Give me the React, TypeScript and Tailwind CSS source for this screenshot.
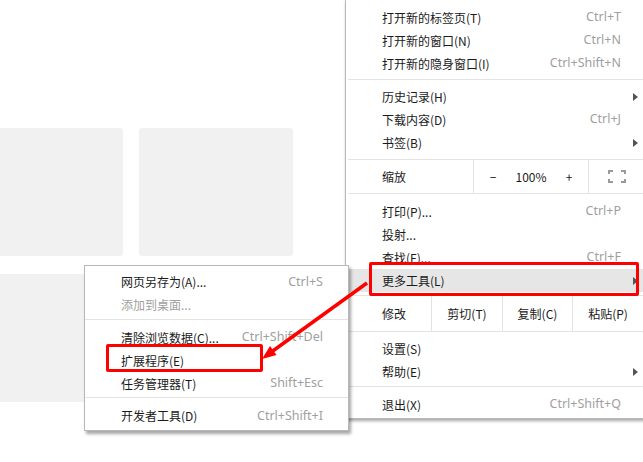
import React from "react";

const Arrow = () => (
  <span className="absolute right-[7px] top-1/2 -translate-y-1/2 w-0 h-0 border-y-[4px] border-y-transparent border-l-[5px] border-l-[#555]" />
);

type ItemProps = { label: string; shortcut?: string; arrow?: boolean; disabled?: boolean; highlight?: boolean };

const Key = ({ children }: { children?: React.ReactNode }) => (
  <span className="ml-auto text-[#a0a0a0] text-[12.5px]" style={{ fontFamily: '"Noto Sans", "Noto Sans CJK SC", sans-serif' }}>
    {children}
  </span>
);

const MainItem = ({ label, shortcut, arrow, disabled, highlight }: ItemProps) => (
  <div className={`relative flex items-center h-[23px] pl-[36px] pr-[24px] ${highlight ? "bg-[#e6e6e6]" : ""}`}>
    <span className={disabled ? "text-[#a0a0a0]" : "text-[#1a1a1a]"}>{label}</span>
    <Key>{shortcut}</Key>
    {arrow && <Arrow />}
  </div>
);

export default function App() {
  return (
    <div
      className="relative w-[643px] h-[462px] bg-white overflow-hidden text-[12px] leading-none"
      style={{ fontFamily: '"Noto Sans CJK SC", "Noto Sans", sans-serif' }}
    >
      {/* page background tiles */}
      <div className="pt-[128px] flex flex-col gap-[18px]">
        <div className="flex gap-[16px]">
          <div className="w-[123px] h-[128px] bg-[#f1f1f1] rounded-r-[3px]" />
          <div className="w-[154px] h-[128px] bg-[#f1f1f1] rounded-[3px]" />
        </div>
        <div className="flex gap-[16px]">
          <div className="w-[123px] h-[128px] bg-[#f1f1f1] rounded-r-[3px]" />
          <div className="w-[154px] h-[128px] bg-[#f1f1f1] rounded-[3px]" />
        </div>
      </div>

      {/* main menu */}
      <div className="absolute left-[345px] top-0 w-[300px] h-[419px] bg-white border-l border-b border-[#b8b8b8] shadow-[1px_2px_3px_rgba(0,0,0,0.35)] pt-[6px]">
        <MainItem label="打开新的标签页(T)" shortcut="Ctrl+T" />
        <MainItem label="打开新的窗口(N)" shortcut="Ctrl+N" />
        <MainItem label="打开新的隐身窗口(I)" shortcut="Ctrl+Shift+N" />
        <div className="h-px bg-[#e3e3e3] ml-[2px] mt-[4px] mb-[5px]" />
        <MainItem label="历史记录(H)" arrow />
        <MainItem label="下载内容(D)" shortcut="Ctrl+J" />
        <MainItem label="书签(B)" arrow />
        <div className="h-[5px]" />
        <div className="flex h-[35px] border-y border-[#e3e3e3] ml-[2px]">
          <div className="w-[126px] pl-[34px] flex items-center text-[#1a1a1a] border-r border-[#e3e3e3]">缩放</div>
          <div className="w-[115px] flex items-center text-[#1a1a1a] border-r border-[#e3e3e3]">
            <span className="w-[38px] text-center">−</span>
            <span className="w-[38px] text-center">100%</span>
            <span className="w-[38px] text-center">+</span>
          </div>
          <div className="w-[55px] flex items-center justify-center">
            <svg width="18" height="13" viewBox="0 0 18 13" fill="none" stroke="#9a9a9a" strokeWidth="2">
              <path d="M1 4V1h4M13 1h4v3M17 9v3h-4M5 12H1V9" />
            </svg>
          </div>
        </div>
        <div className="h-[6px]" />
        <MainItem label="打印(P)..." shortcut="Ctrl+P" />
        <MainItem label="投射..." />
        <MainItem label="查找(F)..." shortcut="Ctrl+F" />
        <MainItem label="更多工具(L)" arrow highlight />
        <div className="h-[3px]" />
        <div className="flex h-[37px] border-y border-[#e3e3e3] ml-[2px] text-[#1a1a1a]">
          <div className="w-[84px] pl-[34px] flex items-center border-r border-[#e3e3e3]">修改</div>
          <div className="w-[71px] flex items-center justify-center border-r border-[#e3e3e3]">剪切(T)</div>
          <div className="w-[70px] flex items-center justify-center border-r border-[#e3e3e3]">复制(C)</div>
          <div className="w-[70px] flex items-center justify-center">粘贴(P)</div>
        </div>
        <div className="h-[5px]" />
        <MainItem label="设置(S)" />
        <MainItem label="帮助(E)" arrow />
        <div className="h-px bg-[#e3e3e3] ml-[2px] mt-[3px] mb-[6px]" />
        <MainItem label="退出(X)" shortcut="Ctrl+Shift+Q" />
      </div>

      {/* red box around 更多工具 */}
      <div className="absolute left-[369px] top-[262px] w-[270px] h-[34px] border-[3px] border-[#ff0000] rounded-[2px]" />

      {/* submenu */}
      <div className="absolute left-[84px] top-[265px] w-[265px] h-[166px] bg-white border border-[#b8b8b8] shadow-[2px_3px_3px_rgba(0,0,0,0.35)] pt-[5px]">
        <div className="flex items-center h-[22px] pl-[36px] pr-[25px]">
          <span className="text-[#1a1a1a]">网页另存为(A)...</span>
          <Key>Ctrl+S</Key>
        </div>
        <div className="flex items-center h-[23px] pl-[36px] pr-[25px]">
          <span className="text-[#a0a0a0]">添加到桌面...</span>
        </div>
        <div className="h-px bg-[#e3e3e3] mt-[3px] mb-[6px]" />
        <div className="flex items-center h-[23px] pl-[36px] pr-[25px]">
          <span className="text-[#1a1a1a]">清除浏览数据(C)...</span>
          <Key>Ctrl+Shift+Del</Key>
        </div>
        <div className="flex items-center h-[23px] pl-[36px] pr-[25px]">
          <span className="text-[#1a1a1a]">扩展程序(E)</span>
        </div>
        <div className="flex items-center h-[23px] pl-[36px] pr-[25px]">
          <span className="text-[#1a1a1a]">任务管理器(T)</span>
          <Key>Shift+Esc</Key>
        </div>
        <div className="h-px bg-[#e3e3e3] mt-[2px] mb-[7px]" />
        <div className="flex items-center h-[22px] pl-[36px] pr-[25px]">
          <span className="text-[#1a1a1a]">开发者工具(D)</span>
          <Key>Ctrl+Shift+I</Key>
        </div>
      </div>

      {/* red box around 扩展程序 */}
      <div className="absolute left-[106px] top-[344px] w-[157px] h-[28px] border-[3px] border-[#ff0000] rounded-[2px]" />

      {/* arrow */}
      <svg className="absolute left-0 top-0 pointer-events-none" width="643" height="462">
        <line x1="367" y1="283" x2="270" y2="353" stroke="#ff0000" strokeWidth="3.5" />
        <polygon points="262,359 276.5,355 270,346" fill="#ff0000" />
      </svg>
    </div>
  );
}
